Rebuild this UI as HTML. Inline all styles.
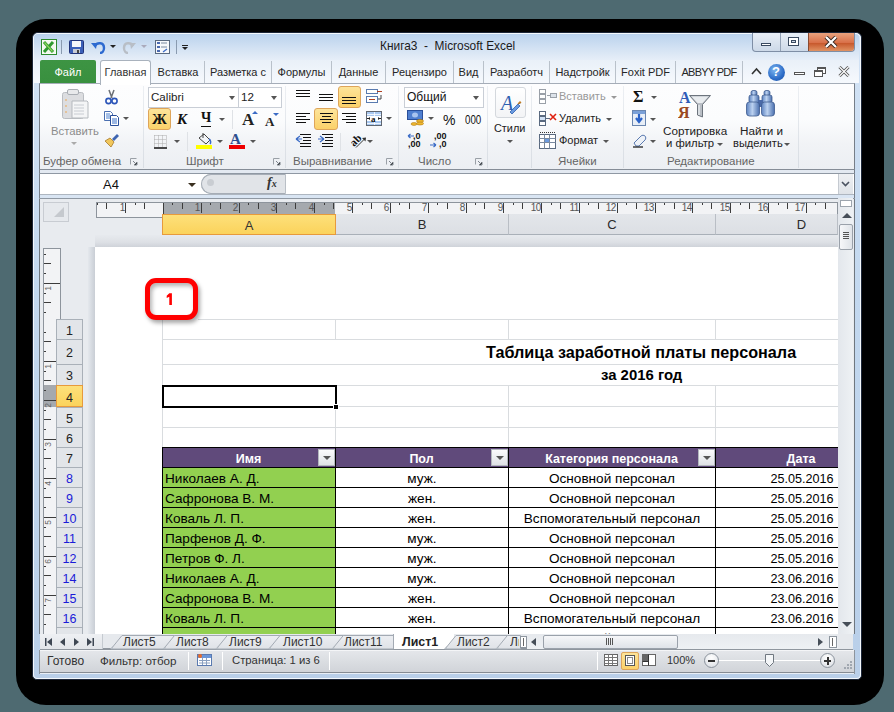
<!DOCTYPE html>
<html><head><meta charset="utf-8">
<style>
*{margin:0;padding:0;box-sizing:border-box}
html,body{width:894px;height:712px;overflow:hidden;background:#4e6a71;font-family:"Liberation Sans",sans-serif;font-size:11.5px;color:#222}
div,span{position:absolute}
.t{white-space:nowrap}
#shadow{left:16px;top:19px;width:868px;height:686px;background:#000;border-radius:30px}
#win{left:32px;top:32px;width:830px;height:648px;background:#bfd4ec;border:1px solid #1c2638;border-radius:6px 6px 5px 5px}
#winin{left:33px;top:33px;width:828px;height:646px;border:1px solid #f4f8fc;border-radius:5px 5px 4px 4px;background:linear-gradient(#d3e3f5,#c3d8ef 40%,#b9cfe9)}
#title{left:34px;top:34px;width:825px;height:26px;background:linear-gradient(#bad2ed,#d3e2f3 55%,#e6eef8);border-radius:4px 4px 0 0}
#tabs{left:34px;top:60px;width:825px;height:23px;background:linear-gradient(#e9f0f8,#f6f9fd)}
.tab{top:60px;height:23px;line-height:24px;text-align:center;color:#262626;font-size:11px;white-space:nowrap;overflow:hidden}
.tsep{top:61px;width:1px;height:22px;background:#b9c1ca}
#ribbon{left:39px;top:83px;width:816px;height:87px;background:linear-gradient(#fdfdfe,#fbfcfd 42%,#f1f3f6 70%,#eceff3);border-top:1px solid #a5adb8;border-bottom:1px solid #858d97;border-left:1px solid #767e88;border-right:1px solid #767e88}
.glabel{top:154px;height:14px;line-height:14px;text-align:center;color:#656565;font-size:11.5px;white-space:nowrap}
.gsep{top:86px;width:1px;height:82px;background:linear-gradient(#eceff3,#d8dde3)}
.rt{color:#333;font-size:11.5px;white-space:nowrap}
.dd{width:0;height:0;border-left:3px solid transparent;border-right:3px solid transparent;border-top:3px solid #555}
#fbar{left:39px;top:173px;width:816px;height:26px;background:#fff;border-top:1px solid #8f98a3;border-bottom:1px solid #8f98a3;border-left:1px solid #767e88;border-right:1px solid #767e88}
#work{left:39px;top:198px;width:816px;height:436px;background:#e8ebef;border-left:1px solid #6f777f;border-right:1px solid #6f777f}
.rul{background:#fff;border:1px solid #8d949c}
.tk{width:1px;background:#555}
.ch{top:214px;height:21px;background:linear-gradient(#e3e6ea,#dcdfe4);border-right:1px solid #b9bec5;border-bottom:1px solid #a9b0b8;text-align:center;line-height:22px;color:#2a2a2a;font-size:13px}
.rh{left:56px;width:27px;background:#e2e5e9;border-top:1px solid #a9b0b8;border-right:1px solid #a9b0b8;border-left:1px solid #a9b0b8;text-align:center;color:#222;font-size:12.5px;padding-top:2px}
.rh.b{color:#1b1bd8}
.row{left:162px;width:676px}
.c{top:0;height:100%;white-space:nowrap;overflow:hidden;font-size:13.6px;color:#000;line-height:20px}
.cell{font-size:13.6px;color:#000;line-height:18px}
.ddb{width:17px;height:17px;background:linear-gradient(#fbfbfc,#dfe2e6);border:1px solid #b3b8be}
.ddb:after{content:"";position:absolute;left:4px;top:6px;border-left:4px solid transparent;border-right:4px solid transparent;border-top:4px solid #555}
</style></head><body>
<div id="shadow"></div>
<div id="win"></div>
<div id="winin"></div>
<div id="title"></div>
<div class="t" style="left:380px;top:39px;font-size:11.9px;color:#1a1a1a">Книга3&nbsp; -&nbsp; Microsoft Excel</div>
<div id="tabs"></div>
<!-- QAT -->
<svg style="position:absolute;left:41px;top:39px" width="16" height="16" viewBox="0 0 16 16">
 <rect x="0.5" y="0.5" width="15" height="15" fill="#fff" stroke="#2e8b2e"/>
 <rect x="1.5" y="1.5" width="13" height="13" fill="#f3f8ec"/>
 <path d="M3 3l9 10M12 3L3 13" stroke="#2f9a2f" stroke-width="3"/>
 <path d="M3.5 3.5l8 9" stroke="#8fd65a" stroke-width="1.2"/>
</svg>
<div style="left:61px;top:40px;width:1px;height:14px;background:#8a9bb0"></div>
<svg style="position:absolute;left:69px;top:40px" width="15" height="14" viewBox="0 0 15 14">
 <rect x="0.5" y="0.5" width="14" height="13" rx="1" fill="#3a5fb8" stroke="#22357a"/>
 <rect x="3" y="1" width="9" height="6" fill="#f4f6fa"/>
 <rect x="4" y="9" width="7" height="4" fill="#c8ccd6"/><rect x="8" y="10" width="2" height="3" fill="#444"/>
</svg>
<svg style="position:absolute;left:91px;top:40px" width="15" height="14" viewBox="0 0 15 14">
 <path d="M4 6c2-4 9-4 9 2c0 3-2 5-4 5" stroke="#2d6ad0" stroke-width="2.4" fill="none"/>
 <path d="M0 3l6 0-1 6z" fill="#2d6ad0"/>
</svg>
<div class="dd" style="left:110px;top:45px;border-left-width:3px;border-right-width:3px;border-top-width:3px;border-top-color:#222"></div>
<svg style="position:absolute;left:122px;top:40px" width="14" height="14" viewBox="0 0 14 14">
 <path d="M11 6c-2-4-9-4-9 2c0 3 2 5 4 5" stroke="#b8bec6" stroke-width="2.4" fill="none"/>
 <path d="M14 3l-6 0 1 6z" fill="#b8bec6"/>
</svg>
<div class="dd" style="left:141px;top:45px;border-top-color:#aab"></div>
<svg style="position:absolute;left:155px;top:40px" width="15" height="14" viewBox="0 0 15 14">
 <rect x="0.5" y="0.5" width="14" height="13" fill="#f6f8fb" stroke="#5a6a80"/>
 <rect x="2" y="2" width="3" height="2" fill="#4a6ab0"/><rect x="2" y="6" width="3" height="2" fill="#4a6ab0"/><rect x="2" y="10" width="3" height="2" fill="#4a6ab0"/>
 <path d="M6 3h6M6 7h6" stroke="#7a8aa0"/><path d="M8 12l4-3" stroke="#3a6bc6" stroke-width="1.3"/>
</svg>
<div style="left:176px;top:40px;width:1px;height:14px;background:#8a9bb0"></div>
<div style="left:182px;top:45px;width:6px;height:1px;background:#222"></div>
<div class="dd" style="left:182px;top:47px;border-top-color:#222"></div>

<!-- title buttons -->
<div style="left:752px;top:33px;width:103px;height:19px;border:1px solid #7e8ea5;border-top:none;border-radius:0 0 4px 4px;background:linear-gradient(#e8eef6,#cdd9e8);overflow:hidden">
 <div style="left:27px;top:0;width:1px;height:19px;background:#93a2b6"></div>
 <div style="left:55px;top:0;width:47px;height:19px;background:linear-gradient(#e8a27e,#d9714a 50%,#c85a2e 55%,#e39a6a);border-left:1px solid #8a4a30"></div>
</div>
<div style="left:761px;top:43px;width:10px;height:3px;background:#fff;border:1px solid #3a4a60"></div>
<div style="left:788px;top:37px;width:11px;height:9px;background:#fff;border:1px solid #3a4a60"></div>
<div style="left:791px;top:40px;width:5px;height:3px;background:#cfd9e6;border:1px solid #3a4a60"></div>
<svg style="position:absolute;left:824px;top:36px" width="14" height="12" viewBox="0 0 14 12"><path d="M2 1l10 10M12 1L2 11" stroke="#3a2a22" stroke-width="4"/><path d="M2 1l10 10M12 1L2 11" stroke="#fff" stroke-width="2.2"/></svg>

<!-- tab row right icons -->
<svg style="position:absolute;left:751px;top:67px" width="11" height="9" viewBox="0 0 11 9"><path d="M1 7l4.5-5 4.5 5" stroke="#333" stroke-width="1.6" fill="none"/></svg>
<div style="left:768px;top:64px;width:17px;height:17px;border-radius:50%;background:radial-gradient(circle at 40% 35%,#7db6f0,#2d6dc8 60%,#1c4f9e);"></div>
<div class="t" style="left:772px;top:64px;font-size:13px;font-weight:bold;color:#fff">?</div>
<div style="left:794px;top:72px;width:11px;height:3px;border:1px solid #555;background:#fff"></div>
<div style="left:817px;top:67px;width:9px;height:7px;border:1px solid #555;border-top-width:2px;background:#fff"></div>
<div style="left:814px;top:70px;width:9px;height:7px;border:1px solid #555;border-top-width:2px;background:#fff"></div>
<svg style="position:absolute;left:838px;top:66px" width="12" height="11" viewBox="0 0 12 11"><path d="M1.5 1l9 9M10.5 1l-9 9" stroke="#555" stroke-width="3"/><path d="M1.5 1l9 9M10.5 1l-9 9" stroke="#fff" stroke-width="1.2"/></svg>

<!-- file tab -->
<div style="left:40px;top:60px;width:56px;height:23px;background:linear-gradient(#3d9443,#39903f);border-radius:2px 2px 0 0"></div>
<div class="tab" style="left:40px;width:56px;color:#fff">Файл</div>
<div class="tab" style="left:100px;width:50px">Главная</div>
<div class="tab" style="left:152px;width:52px">Вставка</div><div class="tsep" style="left:204px"></div>
<div class="tab" style="left:205px;width:66px">Разметка с</div><div class="tsep" style="left:271px"></div>
<div class="tab" style="left:272px;width:59px">Формулы</div><div class="tsep" style="left:331px"></div>
<div class="tab" style="left:332px;width:53px">Данные</div><div class="tsep" style="left:385px"></div>
<div class="tab" style="left:386px;width:67px">Рецензиро</div><div class="tsep" style="left:453px"></div>
<div class="tab" style="left:454px;width:29px">Вид</div><div class="tsep" style="left:483px"></div>
<div class="tab" style="left:484px;width:65px">Разработч</div><div class="tsep" style="left:549px"></div>
<div class="tab" style="left:550px;width:65px">Надстройк</div><div class="tsep" style="left:615px"></div>
<div class="tab" style="left:616px;width:59px">Foxit PDF</div><div class="tsep" style="left:675px"></div>
<div class="tab" style="left:676px;width:66px;letter-spacing:-0.7px">ABBYY PDF</div><div class="tsep" style="left:742px"></div>

<!-- ribbon -->
<div id="ribbon"></div>
<div style="left:100px;top:60px;width:51px;height:25px;background:#fff;border:1px solid #a9b2bd;border-bottom:none;border-radius:3px 3px 0 0"></div>
<div class="tab" style="left:100px;width:51px;color:#333">Главная</div>
<div class="gsep" style="left:143px"></div>
<div class="gsep" style="left:285px"></div>
<div class="gsep" style="left:398px"></div>
<div class="gsep" style="left:487px"></div>
<div class="gsep" style="left:531px"></div>
<div class="gsep" style="left:623px"></div>
<div class="gsep" style="left:798px"></div>
<div class="glabel" style="left:43px">Буфер обмена</div>
<div class="glabel" style="left:186px">Шрифт</div>
<div class="glabel" style="left:293px">Выравнивание</div>
<div class="glabel" style="left:418px">Число</div>
<div class="glabel" style="left:558px">Ячейки</div>
<div class="glabel" style="left:667px">Редактирование</div>

<!-- RIBBON -->
<!-- clipboard -->
<svg style="position:absolute;left:60px;top:88px" width="30" height="32" viewBox="0 0 30 32">
 <rect x="2.5" y="4.5" width="21" height="26" rx="2" fill="#dcdde0" stroke="#b9bcc1"/>
 <rect x="7.5" y="1.5" width="11" height="5" rx="1.5" fill="#e8e9eb" stroke="#a9adb3"/>
 <path d="M12 13h15l1 1v16H12z" fill="#f4f5f6" stroke="#b5b9be"/>
 <path d="M14 17h10M14 20h10M14 23h10M14 26h10" stroke="#c8ccd2"/>
 <circle cx="6" cy="12" r="0.8" fill="#f0a040"/><circle cx="6" cy="18" r="0.8" fill="#f0a040"/><circle cx="6" cy="24" r="0.8" fill="#f0a040"/>
</svg>
<div class="t" style="left:51px;top:125px;font-size:11.3px;color:#8c8c8c">Вставить</div>
<div class="dd" style="left:71px;top:142px;border-top-color:#aaa"></div>
<svg style="position:absolute;left:105px;top:89px" width="13" height="16" viewBox="0 0 13 16">
 <path d="M4 1l3 8M9 1L6 9" stroke="#6b6f75" stroke-width="1.5"/>
 <circle cx="3.5" cy="12" r="2.6" fill="none" stroke="#2c55b8" stroke-width="1.6"/>
 <circle cx="9.5" cy="12" r="2.6" fill="none" stroke="#2c55b8" stroke-width="1.6"/>
</svg>
<svg style="position:absolute;left:103px;top:111px" width="17" height="15" viewBox="0 0 17 15">
 <path d="M1.5 0.5h6l2 2v7h-8z" fill="#fff" stroke="#4a6fb0"/>
 <path d="M3 3h4M3 5h4M3 7h4" stroke="#4a80d0"/>
 <path d="M7.5 4.5h6l2 2v8h-8z" fill="#fff" stroke="#2a4f9a"/>
 <path d="M9 8h5M9 10h5M9 12h5" stroke="#3a70c8"/>
</svg>
<div class="dd" style="left:123px;top:117px"></div>
<svg style="position:absolute;left:103px;top:133px" width="17" height="15" viewBox="0 0 17 15">
 <path d="M9 6l5-5 2 2-5 5z" fill="#3d64b0"/>
 <path d="M2 8l5-3 4 4-3 5z" fill="#f1c75c" stroke="#a77a2a" stroke-width="0.8"/>
</svg>
<svg style="position:absolute;left:130px;top:158px" width="8" height="8" viewBox="0 0 8 8"><path d="M0.5 0.5h6M0.5 0.5v6" stroke="#9aa0a7"/><path d="M3 3l4 4M7 4v3H4" stroke="#7d848c"/></svg>

<!-- font -->
<div style="left:148px;top:87px;width:91px;height:21px;background:#fff;border:1px solid #c9ced6"></div>
<div style="left:238px;top:87px;width:44px;height:21px;background:#fff;border:1px solid #c9ced6"></div>
<div class="t" style="left:151px;top:90px;font-size:11.6px;color:#222">Calibri</div>
<div class="dd" style="left:229px;top:96px;border-left-width:3.5px;border-right-width:3.5px;border-top-width:4px"></div>
<div class="t" style="left:241px;top:90px;font-size:11.6px;color:#222">12</div>
<div class="dd" style="left:271px;top:96px;border-left-width:3.5px;border-right-width:3.5px;border-top-width:4px"></div>
<div style="left:148px;top:108px;width:23px;height:22px;background:linear-gradient(#fde49a,#fbd16a);border:1px solid #dea55a;border-radius:3px"></div>
<div class="t" style="left:152px;top:111px;font-family:'Liberation Serif';font-weight:bold;font-size:15px;color:#111">Ж</div>
<div class="t" style="left:177px;top:111px;font-family:'Liberation Serif';font-weight:bold;font-style:italic;font-size:15px;color:#111">К</div>
<div class="t" style="left:201px;top:110px;font-family:'Liberation Serif';font-weight:bold;font-size:14px;color:#111">Ч</div>
<div style="left:201px;top:126px;width:10px;height:1px;background:#111"></div>
<div class="dd" style="left:219px;top:118px"></div>
<div style="left:232px;top:110px;width:1px;height:19px;background:#dfe2e6"></div>
<div class="t" style="left:242px;top:110px;font-family:'Liberation Serif';font-weight:bold;font-size:17px;color:#222">A</div>
<div style="left:252px;top:111px;width:0;height:0;border-left:3px solid transparent;border-right:3px solid transparent;border-bottom:3px solid #3a6bc6"></div>
<div class="t" style="left:265px;top:114px;font-family:'Liberation Serif';font-weight:bold;font-size:13px;color:#222">A</div>
<div style="left:273px;top:113px;width:0;height:0;border-left:3px solid transparent;border-right:3px solid transparent;border-top:3px solid #3a6bc6"></div>
<svg style="position:absolute;left:154px;top:135px" width="14" height="14" viewBox="0 0 14 14">
 <path d="M0.5 0.5h12M0.5 4.5h12M0.5 8.5h12M0.5 0.5v12M4.5 0.5v12M8.5 0.5v12M12.5 0.5v12" stroke="#aaa" stroke-dasharray="1 1"/>
 <path d="M0 13h13" stroke="#111" stroke-width="1.5"/>
</svg>
<div class="dd" style="left:174px;top:140px"></div>
<div style="left:187px;top:132px;width:1px;height:19px;background:#dfe2e6"></div>
<svg style="position:absolute;left:196px;top:132px" width="17" height="17" viewBox="0 0 17 17">
 <path d="M3 6l5-4 6 6-4 4z" fill="#f3f5f8" stroke="#444" stroke-width="1"/>
 <path d="M7 1v5" stroke="#444"/>
 <path d="M13 7c2 1 2 4 1 5" stroke="#3a6bc6" stroke-width="1.5" fill="none"/>
 <rect x="0" y="13" width="16" height="4" fill="#ffff00"/>
</svg>
<div class="dd" style="left:217px;top:140px"></div>
<div class="t" style="left:230px;top:131px;font-family:'Liberation Serif';font-weight:bold;font-size:15px;color:#2d4f8e">A</div>
<div style="left:229px;top:145px;width:16px;height:4px;background:#ee0000"></div>
<div class="dd" style="left:250px;top:140px"></div>
<svg style="position:absolute;left:273px;top:158px" width="8" height="8" viewBox="0 0 8 8"><path d="M0.5 0.5h6M0.5 0.5v6" stroke="#9aa0a7"/><path d="M3 3l4 4M7 4v3H4" stroke="#7d848c"/></svg>

<!-- alignment -->
<div style="left:338px;top:86px;width:23px;height:22px;background:linear-gradient(#fde49a,#fbd16a);border:1px solid #dea55a;border-radius:3px"></div>
<div style="left:314px;top:108px;width:24px;height:22px;background:linear-gradient(#fde49a,#fbd16a);border:1px solid #dea55a;border-radius:3px"></div>
<svg style="position:absolute;left:0;top:0" width="894" height="180" viewBox="0 0 894 180">
 <g stroke="#111" stroke-width="1">
  <path d="M296 90.5h14M296 93.5h14M296 96.5h14"/>
  <path d="M319 94.5h14M319 97.5h14M319 100.5h14"/>
  <path d="M342 97.5h14M342 100.5h14M342 103.5h14"/>
  <path d="M296 113.5h14M296 116.5h10M296 119.5h14M296 122.5h10"/>
  <path d="M320 113.5h13M322 116.5h9M320 119.5h13M322 122.5h9"/>
  <path d="M342 113.5h14M346 116.5h10M342 119.5h14M346 122.5h10"/>
  <path d="M300 134.5h11M303 137.5h8M303 140.5h8M300 143.5h11M300 146.5h11"/>
  <path d="M322 134.5h11M325 137.5h8M325 140.5h8M322 143.5h11M322 146.5h11"/>
 </g>
 <path d="M296 139l4-3M296 139l4 3M296 139h6" stroke="#3a6bc6" stroke-width="1.2" fill="none"/>
 <path d="M324 139l-4-3M324 139l-4 3M324 139h-6" stroke="#3a6bc6" stroke-width="1.2" fill="none"/>
 <path d="M340.5 133v18" stroke="#dfe2e6"/>
 <rect x="366.5" y="89.5" width="11" height="4" fill="#fff" stroke="#5a7bb0"/>
 <path d="M377 91.5h5" stroke="#b04020"/>
 <rect x="366.5" y="96.5" width="11" height="6" fill="#fff" stroke="#5a7bb0"/>
 <path d="M369 99.5h6" stroke="#b04020"/>
 <path d="M381 95v4h-3" stroke="#444" fill="none"/>
 <rect x="366.5" y="111.5" width="15" height="14" fill="#fff" stroke="#5f6670"/>
 <rect x="367" y="112" width="14" height="4" fill="#a9c8f0"/><rect x="367" y="121" width="14" height="4" fill="#a9c8f0"/>
 <path d="M367 114.5h14M367 123.5h14M374.5 112v4M374.5 121v4" stroke="#fff" stroke-width="0.8"/>
 <path d="M367 118.5h3M378 118.5h3" stroke="#222"/>
 <path d="M368 118.5l2-1.5v3z M380 118.5l-2-1.5v3z" fill="#222"/>
 <text x="371" y="121.5" font-family="Liberation Serif" font-weight="bold" font-size="9" fill="#111">a</text>
 <text x="0" y="0" transform="translate(354 147) rotate(-45)" font-family="Liberation Serif" font-weight="bold" font-size="11" fill="#111">ab</text>
 <path d="M356 147.5l9-9" stroke="#333" stroke-width="1"/>
 <path d="M366 137.5l-4 0.5 3.5 3.5z" fill="#333"/>
</svg>
<div class="dd" style="left:386px;top:117px"></div>
<div class="dd" style="left:367px;top:140px"></div>
<svg style="position:absolute;left:386px;top:158px" width="8" height="8" viewBox="0 0 8 8"><path d="M0.5 0.5h6M0.5 0.5v6" stroke="#9aa0a7"/><path d="M3 3l4 4M7 4v3H4" stroke="#7d848c"/></svg>

<!-- number -->
<div style="left:404px;top:87px;width:80px;height:21px;background:#fff;border:1px solid #c9ced6"></div>
<div class="t" style="left:407px;top:90px;font-size:12px;color:#111">Общий</div>
<div class="dd" style="left:473px;top:96px;border-left-width:3.5px;border-right-width:3.5px;border-top-width:4px"></div>
<svg style="position:absolute;left:407px;top:110px" width="18" height="17" viewBox="0 0 18 17">
 <rect x="0.5" y="0.5" width="15" height="9" fill="#4f7fd0" stroke="#2a4f9a"/>
 <ellipse cx="8" cy="5" rx="3" ry="2.5" fill="#a9c4ef"/>
 <ellipse cx="13" cy="11" rx="3.5" ry="1.5" fill="#f0b830" stroke="#b07a10" stroke-width="0.6"/>
 <ellipse cx="13" cy="13.5" rx="3.5" ry="1.5" fill="#f0b830" stroke="#b07a10" stroke-width="0.6"/>
 <ellipse cx="7" cy="14" rx="3" ry="1.4" fill="#f0b830" stroke="#b07a10" stroke-width="0.6"/>
</svg>
<div class="dd" style="left:428px;top:117px"></div>
<div class="t" style="left:443px;top:112px;font-size:14px;color:#111">%</div>
<div class="t" style="left:465px;top:112px;font-size:13px;color:#111;transform:scaleX(0.75);transform-origin:left">000</div>
<div class="t" style="left:413px;top:132px;font-size:9px;font-weight:bold;color:#111;line-height:8px">,0<br><span style="position:static;margin-left:-5px">,00</span></div>
<div class="t" style="left:434px;top:132px;font-size:9px;font-weight:bold;color:#111;line-height:8px">,00<br><span style="position:static;margin-left:5px">,0</span></div>
<svg style="position:absolute;left:407px;top:133px" width="40" height="16" viewBox="0 0 40 16">
 <path d="M1 3h6M1 3l2.5-2M1 3l2.5 2" stroke="#3a6bc6" stroke-width="1.2" fill="none"/>
 <path d="M23 12h6M29 12l-2.5-2M29 12l-2.5 2" stroke="#3a6bc6" stroke-width="1.2" fill="none"/>
</svg>
<svg style="position:absolute;left:475px;top:158px" width="8" height="8" viewBox="0 0 8 8"><path d="M0.5 0.5h6M0.5 0.5v6" stroke="#9aa0a7"/><path d="M3 3l4 4M7 4v3H4" stroke="#7d848c"/></svg>

<!-- styles -->
<div style="left:495px;top:87px;width:31px;height:31px;background:linear-gradient(#fff,#f3f4f6);border:1px solid #d4d8dd;border-radius:3px"></div>
<div class="t" style="left:501px;top:92px;font-family:'Liberation Serif';font-style:italic;font-size:20px;color:#2d5fb0">A</div>
<svg style="position:absolute;left:508px;top:100px" width="14" height="14" viewBox="0 0 14 14"><path d="M2 12l8-8 2 2-8 8z" fill="#6b9be0" stroke="#2d5fb0" stroke-width="0.8"/><path d="M10 4l2-2 1 1" stroke="#c07a20" stroke-width="1.3"/></svg>
<div class="t" style="left:494px;top:122px;font-size:10.9px;color:#222">Стили</div>
<div class="dd" style="left:507px;top:140px"></div>

<!-- cells -->
<svg style="position:absolute;left:539px;top:89px" width="18" height="16" viewBox="0 0 18 16">
 <rect x="0.5" y="0.5" width="6" height="4" fill="#fff" stroke="#9aa0a8"/><rect x="0.5" y="5.5" width="6" height="4" fill="#fff" stroke="#9aa0a8"/><rect x="0.5" y="10.5" width="6" height="4" fill="#fff" stroke="#9aa0a8"/>
 <rect x="11.5" y="4.5" width="6" height="4" fill="#dde3ea" stroke="#9aa0a8"/><path d="M8 6.5h3" stroke="#9aa0a8"/>
</svg>
<div class="t" style="left:559px;top:90px;font-size:11px;color:#999">Вставить</div>
<div class="dd" style="left:611px;top:96px;border-top-color:#999"></div>
<svg style="position:absolute;left:539px;top:111px" width="18" height="15" viewBox="0 0 18 15">
 <rect x="0.5" y="0.5" width="6" height="4" fill="#fff" stroke="#5a6a80"/><rect x="0.5" y="5.5" width="6" height="4" fill="#cfe0f5" stroke="#5a6a80"/><rect x="0.5" y="10.5" width="6" height="4" fill="#fff" stroke="#5a6a80"/>
 <path d="M7 7.5h4" stroke="#5a6a80"/><path d="M11 3l6 6M17 3l-6 6" stroke="#e02010" stroke-width="1.6"/>
</svg>
<div class="t" style="left:559px;top:112px;font-size:11px;color:#222">Удалить</div>
<div class="dd" style="left:606px;top:118px"></div>
<svg style="position:absolute;left:539px;top:132px" width="18" height="17" viewBox="0 0 18 17">
 <rect x="0.5" y="2.5" width="16" height="14" fill="#fff" stroke="#5a6a80"/>
 <path d="M0.5 6.5h16M0.5 10.5h16M5.5 2.5v14M10.5 2.5v14" stroke="#7a8aa0"/>
 <rect x="6" y="7" width="4" height="3" fill="#6b9be0"/>
 <path d="M1 0.5h15" stroke="#333" stroke-dasharray="1 1"/>
</svg>
<div class="t" style="left:559px;top:134px;font-size:11px;color:#222">Формат</div>
<div class="dd" style="left:603px;top:140px"></div>

<!-- editing -->
<div class="t" style="left:633px;top:88px;font-family:'Liberation Serif';font-weight:bold;font-size:16px;color:#111">Σ</div>
<div class="dd" style="left:651px;top:96px"></div>
<svg style="position:absolute;left:632px;top:110px" width="15" height="17" viewBox="0 0 15 17">
 <rect x="0.5" y="0.5" width="13" height="15" fill="#e8eef7" stroke="#6a86b0"/>
 <rect x="1" y="1" width="12" height="3" fill="#7aa0d8"/>
 <path d="M7 4v7M4 8l3 4 3-4" stroke="#2a62c8" stroke-width="2.2" fill="none"/>
</svg>
<div class="dd" style="left:650px;top:118px"></div>
<svg style="position:absolute;left:632px;top:134px" width="16" height="14" viewBox="0 0 16 14">
 <path d="M2 9l7-7c1-1 3-1 4 0s1 3 0 4l-6 6H4z" fill="#eef2f8" stroke="#5a7ab0"/>
 <path d="M1 13h10" stroke="#111" stroke-width="1.2"/>
</svg>
<div class="dd" style="left:650px;top:140px"></div>
<svg style="position:absolute;left:678px;top:88px" width="34" height="32" viewBox="0 0 34 32">
 <text x="1" y="15" font-family="Liberation Serif" font-weight="bold" font-size="16" fill="#2f5cb8">A</text>
 <text x="0" y="30" font-family="Liberation Serif" font-weight="bold" font-size="16" fill="#9a4a22">Я</text>
 <path d="M11.5 7.5h21l-8 9v12.5l-5-2v-10.5z" fill="#b9bec5" stroke="#6d747d"/>
 <path d="M13.5 8.5h17l-6 6.5h-5z" fill="#e9ecef"/>
 <path d="M21 17v10" stroke="#e5e8eb" stroke-width="1.5"/>
</svg>
<div class="t" style="left:663px;top:124px;font-size:11.7px;color:#222">Сортировка</div>
<div class="t" style="left:666px;top:137px;font-size:11.3px;color:#222">и фильтр</div>
<div class="dd" style="left:717px;top:143px"></div>
<svg style="position:absolute;left:745px;top:89px" width="32" height="30" viewBox="0 0 32 30">
 <defs><linearGradient id="bn" x1="0" x2="1"><stop offset="0" stop-color="#5c82c0"/><stop offset="0.45" stop-color="#bcd2f0"/><stop offset="1" stop-color="#4a6fae"/></linearGradient></defs>
 <rect x="6" y="1.5" width="6" height="5" rx="2" fill="url(#bn)" stroke="#3d5a8e" stroke-width="0.8"/>
 <rect x="19" y="1.5" width="6" height="5" rx="2" fill="url(#bn)" stroke="#3d5a8e" stroke-width="0.8"/>
 <rect x="4" y="6" width="10" height="8" rx="2" fill="url(#bn)" stroke="#3d5a8e" stroke-width="0.8"/>
 <rect x="17" y="6" width="10" height="8" rx="2" fill="url(#bn)" stroke="#3d5a8e" stroke-width="0.8"/>
 <rect x="13" y="11" width="5" height="7" fill="#4a6aa8"/>
 <rect x="1.5" y="13" width="13" height="14" rx="3" fill="url(#bn)" stroke="#3d5a8e" stroke-width="0.8"/>
 <rect x="16.5" y="13" width="13" height="14" rx="3" fill="url(#bn)" stroke="#3d5a8e" stroke-width="0.8"/>
</svg>
<div class="t" style="left:740px;top:124px;font-size:11.7px;color:#222">Найти и</div>
<div class="t" style="left:733px;top:137px;font-size:11.1px;color:#222">выделить</div>
<div class="dd" style="left:784px;top:143px"></div>

<!-- /RIBBON -->
<!-- formula bar -->
<div style="left:39px;top:170px;width:816px;height:3px;background:#e3e9f1;border-left:1px solid #767e88;border-right:1px solid #767e88"></div>
<div id="fbar"></div>
<div style="left:40px;top:194px;width:814px;height:4px;background:#d9e5f3;border-top:1px solid #aeb6c0"></div>
<div class="t" style="left:103px;top:177px;font-size:13px;color:#111">A4</div>
<div class="dd" style="left:188px;top:183px;border-left-width:4px;border-right-width:4px;border-top-width:4px;border-top-color:#3a3020"></div>
<div style="left:201px;top:174px;width:85px;height:20px;background:#e1e4e8;border:1px solid #a6adb6;border-left:none;border-right:1px solid #b9bfc6;border-radius:10px 0 0 10px"></div>
<div style="left:201px;top:174px;width:20px;height:20px;border:1px solid #a6adb6;border-right:none;border-radius:10px 0 0 10px;background:#e1e4e8"></div>
<div style="left:207px;top:179px;width:7px;height:7px;border-radius:50%;background:#c9cdd2"></div>
<div class="t" style="left:267px;top:175px;font-family:'Liberation Serif';font-style:italic;font-weight:bold;font-size:14px;color:#333">f<span style="position:static;font-size:10px">x</span></div>

<div style="left:838px;top:174px;width:15px;height:20px;background:linear-gradient(#eef0f3,#dfe3e8);border-left:1px solid #c5cad1"></div>
<svg style="position:absolute;left:841px;top:181px" width="9" height="6" viewBox="0 0 9 6"><path d="M1 1l3.5 3.5L8 1" stroke="#4a5260" stroke-width="1.6" fill="none"/></svg>
<!-- workspace -->
<div id="work"></div>
<div style="left:39px;top:198px;width:816px;height:1px;background:#8f98a3"></div>
<!-- select-all corner -->
<div style="left:43px;top:202px;width:26px;height:20px;border:1px solid #c8ccd2;background:#e6e9ed"></div>
<div style="left:54px;top:207px;width:0;height:0;border-left:10px solid transparent;border-bottom:10px solid #c5c9ce"></div>
<!-- horiz ruler -->
<svg style="position:absolute;left:0;top:0" width="894" height="712" viewBox="0 0 894 712">
<rect x="96.5" y="202.5" width="741" height="15" fill="#f2f3f5" stroke="#8d949c"/>
<rect x="163" y="203" width="172" height="11" fill="#a5a9ae"/>
<text x="124.5" y="211" text-anchor="end" font-family="Liberation Sans" font-size="10" letter-spacing="-0.7" fill="#555">1</text>
<text x="199.5" y="211" text-anchor="end" font-family="Liberation Sans" font-size="10" letter-spacing="-0.7" fill="#555">1</text>
<text x="237.5" y="211" text-anchor="end" font-family="Liberation Sans" font-size="10" letter-spacing="-0.7" fill="#555">2</text>
<text x="275.5" y="211" text-anchor="end" font-family="Liberation Sans" font-size="10" letter-spacing="-0.7" fill="#555">3</text>
<text x="313.5" y="211" text-anchor="end" font-family="Liberation Sans" font-size="10" letter-spacing="-0.7" fill="#555">4</text>
<text x="351.5" y="211" text-anchor="end" font-family="Liberation Sans" font-size="10" letter-spacing="-0.7" fill="#555">5</text>
<text x="388.5" y="211" text-anchor="end" font-family="Liberation Sans" font-size="10" letter-spacing="-0.7" fill="#555">6</text>
<text x="426.5" y="211" text-anchor="end" font-family="Liberation Sans" font-size="10" letter-spacing="-0.7" fill="#555">7</text>
<text x="464.5" y="211" text-anchor="end" font-family="Liberation Sans" font-size="10" letter-spacing="-0.7" fill="#555">8</text>
<text x="502.5" y="211" text-anchor="end" font-family="Liberation Sans" font-size="10" letter-spacing="-0.7" fill="#555">9</text>
<text x="540.5" y="211" text-anchor="end" font-family="Liberation Sans" font-size="10" letter-spacing="-0.7" fill="#555">10</text>
<text x="578.5" y="211" text-anchor="end" font-family="Liberation Sans" font-size="10" letter-spacing="-0.7" fill="#555">11</text>
<text x="615.5" y="211" text-anchor="end" font-family="Liberation Sans" font-size="10" letter-spacing="-0.7" fill="#555">12</text>
<text x="653.5" y="211" text-anchor="end" font-family="Liberation Sans" font-size="10" letter-spacing="-0.7" fill="#555">13</text>
<text x="691.5" y="211" text-anchor="end" font-family="Liberation Sans" font-size="10" letter-spacing="-0.7" fill="#555">14</text>
<text x="729.5" y="211" text-anchor="end" font-family="Liberation Sans" font-size="10" letter-spacing="-0.7" fill="#555">15</text>
<text x="767.5" y="211" text-anchor="end" font-family="Liberation Sans" font-size="10" letter-spacing="-0.7" fill="#555">16</text>
<text x="804.5" y="211" text-anchor="end" font-family="Liberation Sans" font-size="10" letter-spacing="-0.7" fill="#555">17</text>
<path d="M97.5 203v2 M106.5 203v6 M125.5 203v10 M135.5 203v2 M144.5 203v6 M163.5 203v15 M172.5 203v2 M182.5 203v6 M201.5 203v10 M210.5 203v2 M220.5 203v6 M239.5 203v10 M248.5 203v2 M258.5 203v6 M276.5 203v10 M286.5 203v2 M295.5 203v6 M314.5 203v10 M324.5 203v2 M333.5 203v6 M352.5 203v10 M362.5 203v2 M371.5 203v6 M390.5 203v10 M399.5 203v2 M409.5 203v6 M428.5 203v10 M437.5 203v2 M447.5 203v6 M466.5 203v10 M475.5 203v2 M484.5 203v6 M503.5 203v10 M513.5 203v2 M522.5 203v6 M541.5 203v10 M551.5 203v2 M560.5 203v6 M579.5 203v10 M588.5 203v2 M598.5 203v6 M617.5 203v10 M626.5 203v2 M636.5 203v6 M655.5 203v10 M664.5 203v2 M674.5 203v6 M692.5 203v10 M702.5 203v2 M711.5 203v6 M730.5 203v10 M740.5 203v2 M749.5 203v6 M768.5 203v10 M778.5 203v2 M787.5 203v6 M806.5 203v10 M815.5 203v2 M825.5 203v6" stroke="#3c3c3c"/>
<rect x="43.5" y="248.5" width="17" height="390" fill="#f2f3f5" stroke="#8d949c"/>
<rect x="44" y="385" width="12" height="22" fill="#a5a9ae"/>
<text x="0" y="0" transform="translate(51 286) rotate(-90)" text-anchor="end" font-family="Liberation Sans" font-size="8.5" fill="#666">1</text>
<text x="0" y="0" transform="translate(51 364) rotate(-90)" text-anchor="end" font-family="Liberation Sans" font-size="8.5" fill="#666">1</text>
<text x="0" y="0" transform="translate(51 403) rotate(-90)" text-anchor="end" font-family="Liberation Sans" font-size="8.5" fill="#666">2</text>
<text x="0" y="0" transform="translate(51 442) rotate(-90)" text-anchor="end" font-family="Liberation Sans" font-size="8.5" fill="#666">3</text>
<text x="0" y="0" transform="translate(51 481) rotate(-90)" text-anchor="end" font-family="Liberation Sans" font-size="8.5" fill="#666">4</text>
<text x="0" y="0" transform="translate(51 520) rotate(-90)" text-anchor="end" font-family="Liberation Sans" font-size="8.5" fill="#666">5</text>
<text x="0" y="0" transform="translate(51 559) rotate(-90)" text-anchor="end" font-family="Liberation Sans" font-size="8.5" fill="#666">6</text>
<text x="0" y="0" transform="translate(51 598) rotate(-90)" text-anchor="end" font-family="Liberation Sans" font-size="8.5" fill="#666">7</text>
<path d="M44 254.5h2 M44 263.5h7 M44 273.5h2 M44 283.5h16 M44 293.5h2 M44 302.5h7 M44 312.5h2 M44 332.5h2 M44 341.5h7 M44 351.5h2 M44 361.5h12 M44 371.5h2 M44 380.5h7 M44 390.5h2 M44 400.5h12 M44 410.5h2 M44 419.5h7 M44 429.5h2 M44 439.5h12 M44 449.5h2 M44 458.5h7 M44 468.5h2 M44 478.5h12 M44 488.5h2 M44 497.5h7 M44 507.5h2 M44 517.5h12 M44 527.5h2 M44 536.5h7 M44 546.5h2 M44 556.5h12 M44 566.5h2 M44 575.5h7 M44 585.5h2 M44 595.5h12 M44 605.5h2 M44 614.5h7 M44 624.5h2" stroke="#3c3c3c"/>
</svg>
<!-- column headers -->
<div class="ch" style="left:162px;width:174px;background:linear-gradient(#fde07a,#fbd35c);border:1px solid #e79a3c;color:#333">A</div>
<div class="ch" style="left:336px;width:173px">B</div>
<div class="ch" style="left:509px;width:207px">C</div>
<div class="ch" style="left:716px;width:122px;text-indent:50px">D</div>
<div style="left:95px;top:235px;width:743px;height:12px;background:linear-gradient(#e7eaee,#dde0e5 60%,#cfd3d9)"></div>
<!-- vertical ruler -->

<!-- page -->
<div style="left:88px;top:247px;width:7px;height:387px;background:linear-gradient(90deg,#e4e8ed,#c9ced5)"></div>
<div style="left:95px;top:247px;width:743px;height:387px;background:#fff"></div>

<!-- GRID -->
<div class="rh" style="top:319px;height:20px;line-height:18px;">1</div>
<div class="rh" style="top:339px;height:25px;line-height:23px;">2</div>
<div class="rh" style="top:364px;height:21px;line-height:19px;">3</div>
<div class="rh" style="top:385px;height:22px;line-height:20px;background:linear-gradient(#fde07a,#fbd35c);border:1px solid #e79a3c;">4</div>
<div class="rh" style="top:407px;height:20px;line-height:18px;">5</div>
<div class="rh" style="top:427px;height:20px;line-height:18px;">6</div>
<div class="rh" style="top:447px;height:20px;line-height:18px;">7</div>
<div class="rh b" style="top:467px;height:20px;line-height:18px;">8</div>
<div class="rh b" style="top:487px;height:20px;line-height:18px;">9</div>
<div class="rh b" style="top:507px;height:20px;line-height:18px;">10</div>
<div class="rh b" style="top:527px;height:20px;line-height:18px;">11</div>
<div class="rh b" style="top:547px;height:20px;line-height:18px;">12</div>
<div class="rh b" style="top:567px;height:20px;line-height:18px;">14</div>
<div class="rh b" style="top:587px;height:20px;line-height:18px;">15</div>
<div class="rh b" style="top:607px;height:20px;line-height:18px;">16</div>
<div class="rh b" style="top:627px;height:7px;line-height:5px;"></div>
<div style="left:198px;top:319px;width:640px;height:1px;background:#d9dcdf"></div>
<div style="left:162px;top:339px;width:676px;height:1px;background:#d9dcdf"></div>
<div style="left:162px;top:364px;width:676px;height:1px;background:#d9dcdf"></div>
<div style="left:162px;top:385px;width:676px;height:1px;background:#d9dcdf"></div>
<div style="left:162px;top:406px;width:676px;height:1px;background:#d9dcdf"></div>
<div style="left:162px;top:427px;width:676px;height:1px;background:#d9dcdf"></div>
<div style="left:162px;top:319px;width:1px;height:128px;background:#d9dcdf"></div>
<div style="left:335px;top:319px;width:1px;height:20px;background:#d9dcdf"></div>
<div style="left:335px;top:385px;width:1px;height:62px;background:#d9dcdf"></div>
<div style="left:508px;top:319px;width:1px;height:20px;background:#d9dcdf"></div>
<div style="left:508px;top:385px;width:1px;height:62px;background:#d9dcdf"></div>
<div style="left:715px;top:319px;width:1px;height:20px;background:#d9dcdf"></div>
<div style="left:715px;top:385px;width:1px;height:62px;background:#d9dcdf"></div>
<div class="t" style="left:486px;top:343px;font-size:16.2px;font-weight:bold;color:#000">Таблица заработной платы персонала</div>
<div class="t" style="left:601px;top:367px;font-size:14.9px;font-weight:bold;color:#000">за 2016 год</div>
<div style="left:162px;top:385px;width:175px;height:23px;border:2px solid #000"></div>
<div style="left:333px;top:404px;width:6px;height:6px;background:#000;border:1px solid #fff"></div>
<div style="left:162px;top:447px;width:676px;height:21px;background:#604a7b;border-top:1px solid #000;border-bottom:1px solid #000"></div>
<div style="left:162px;top:447px;width:1px;height:187px;background:#000"></div>
<div class="t" style="left:162px;top:452px;width:173px;text-align:center;font-size:12.5px;font-weight:bold;color:#fff">Имя</div>
<div class="ddb" style="left:318px;top:449px"></div>
<div style="left:335px;top:447px;width:1px;height:187px;background:#000"></div>
<div class="t" style="left:335px;top:452px;width:173px;text-align:center;font-size:12.5px;font-weight:bold;color:#fff">Пол</div>
<div class="ddb" style="left:491px;top:449px"></div>
<div style="left:508px;top:447px;width:1px;height:187px;background:#000"></div>
<div class="t" style="left:508px;top:452px;width:207px;text-align:center;font-size:12.5px;font-weight:bold;color:#fff">Категория персонала</div>
<div class="ddb" style="left:698px;top:449px"></div>
<div style="left:715px;top:447px;width:1px;height:187px;background:#000"></div>
<div class="t" style="left:715px;top:452px;width:172px;text-align:center;font-size:12.5px;font-weight:bold;color:#fff">Дата</div>
<div style="left:163px;top:468px;width:172px;height:19px;background:#92d050"></div>
<div style="left:162px;top:487px;width:676px;height:1px;background:#000"></div>
<div class="t cell" style="left:165px;top:470px">Николаев А. Д.</div>
<div class="t cell" style="left:336px;top:470px;width:172px;text-align:center">муж.</div>
<div class="t cell" style="left:509px;top:470px;width:206px;text-align:center">Основной персонал</div>
<div class="t cell" style="left:716px;top:470px;width:172px;text-align:center;font-size:12.6px">25.05.2016</div>
<div style="left:163px;top:488px;width:172px;height:19px;background:#92d050"></div>
<div style="left:162px;top:507px;width:676px;height:1px;background:#000"></div>
<div class="t cell" style="left:165px;top:490px">Сафронова В. М.</div>
<div class="t cell" style="left:336px;top:490px;width:172px;text-align:center">жен.</div>
<div class="t cell" style="left:509px;top:490px;width:206px;text-align:center">Основной персонал</div>
<div class="t cell" style="left:716px;top:490px;width:172px;text-align:center;font-size:12.6px">25.05.2016</div>
<div style="left:163px;top:508px;width:172px;height:19px;background:#92d050"></div>
<div style="left:162px;top:527px;width:676px;height:1px;background:#000"></div>
<div class="t cell" style="left:165px;top:510px">Коваль Л. П.</div>
<div class="t cell" style="left:336px;top:510px;width:172px;text-align:center">жен.</div>
<div class="t cell" style="left:509px;top:510px;width:206px;text-align:center">Вспомогательный персонал</div>
<div class="t cell" style="left:716px;top:510px;width:172px;text-align:center;font-size:12.6px">25.05.2016</div>
<div style="left:163px;top:528px;width:172px;height:19px;background:#92d050"></div>
<div style="left:162px;top:547px;width:676px;height:1px;background:#000"></div>
<div class="t cell" style="left:165px;top:530px">Парфенов Д. Ф.</div>
<div class="t cell" style="left:336px;top:530px;width:172px;text-align:center">муж.</div>
<div class="t cell" style="left:509px;top:530px;width:206px;text-align:center">Основной персонал</div>
<div class="t cell" style="left:716px;top:530px;width:172px;text-align:center;font-size:12.6px">25.05.2016</div>
<div style="left:163px;top:548px;width:172px;height:19px;background:#92d050"></div>
<div style="left:162px;top:567px;width:676px;height:1px;background:#000"></div>
<div class="t cell" style="left:165px;top:550px">Петров Ф. Л.</div>
<div class="t cell" style="left:336px;top:550px;width:172px;text-align:center">муж.</div>
<div class="t cell" style="left:509px;top:550px;width:206px;text-align:center">Основной персонал</div>
<div class="t cell" style="left:716px;top:550px;width:172px;text-align:center;font-size:12.6px">25.05.2016</div>
<div style="left:163px;top:568px;width:172px;height:19px;background:#92d050"></div>
<div style="left:162px;top:587px;width:676px;height:1px;background:#000"></div>
<div class="t cell" style="left:165px;top:570px">Николаев А. Д.</div>
<div class="t cell" style="left:336px;top:570px;width:172px;text-align:center">муж.</div>
<div class="t cell" style="left:509px;top:570px;width:206px;text-align:center">Основной персонал</div>
<div class="t cell" style="left:716px;top:570px;width:172px;text-align:center;font-size:12.6px">23.06.2016</div>
<div style="left:163px;top:588px;width:172px;height:19px;background:#92d050"></div>
<div style="left:162px;top:607px;width:676px;height:1px;background:#000"></div>
<div class="t cell" style="left:165px;top:590px">Сафронова В. М.</div>
<div class="t cell" style="left:336px;top:590px;width:172px;text-align:center">жен.</div>
<div class="t cell" style="left:509px;top:590px;width:206px;text-align:center">Основной персонал</div>
<div class="t cell" style="left:716px;top:590px;width:172px;text-align:center;font-size:12.6px">23.06.2016</div>
<div style="left:163px;top:608px;width:172px;height:19px;background:#92d050"></div>
<div style="left:162px;top:627px;width:676px;height:1px;background:#000"></div>
<div class="t cell" style="left:165px;top:610px">Коваль Л. П.</div>
<div class="t cell" style="left:336px;top:610px;width:172px;text-align:center">жен.</div>
<div class="t cell" style="left:509px;top:610px;width:206px;text-align:center">Вспомогательный персонал</div>
<div class="t cell" style="left:716px;top:610px;width:172px;text-align:center;font-size:12.6px">23.06.2016</div>
<div style="left:163px;top:628px;width:172px;height:6px;background:#92d050"></div>
<div class="t cell" style="left:165px;top:630px">Парфенов Д. Ф.</div>
<div class="t cell" style="left:336px;top:630px;width:172px;text-align:center">муж.</div>
<div class="t cell" style="left:509px;top:630px;width:206px;text-align:center">Основной персонал</div>
<div class="t cell" style="left:716px;top:630px;width:172px;text-align:center;font-size:12.6px">23.06.2016</div>

<!-- /GRID -->
<!-- scrollbar -->
<div style="left:838px;top:198px;width:15px;height:436px;background:linear-gradient(90deg,#e3e7ec,#eef1f4)"></div>
<div style="left:840px;top:200px;width:12px;height:7px;background:#fff;border:1px solid #9da5ae"></div>
<div style="left:842px;top:213px;width:0;height:0;border-left:5px solid transparent;border-right:5px solid transparent;border-bottom:5px solid #464e58"></div>
<div style="left:839px;top:224px;width:14px;height:26px;border:1px solid #9aa1aa;border-radius:2px;background:linear-gradient(90deg,#f6f7f9,#dfe3e8)"></div>
<div style="left:843px;top:232px;width:6px;height:1px;background:#555;box-shadow:0 2px 0 #555,0 4px 0 #555,0 6px 0 #555"></div>
<div style="left:842px;top:622px;width:0;height:0;border-left:5px solid transparent;border-right:5px solid transparent;border-top:5px solid #464e58"></div>

<!-- sheet tabs -->
<div style="left:40px;top:634px;width:813px;height:16px;background:#e6e9ed;border-bottom:2px solid #8f969e"></div>
<!-- status -->
<div style="left:39px;top:650px;width:816px;height:24px;background:linear-gradient(#f4f5f7 0,#f4f5f7 1px,#e4e6ea 1px,#dbdee2 45%,#d1d4d9 90%,#cdd1d6 22px,#858b93 22px,#858b93 23px,#e8eef6 23px);border-left:1px solid #8d949c;border-right:1px solid #8d949c"></div>
<div class="t" style="left:47px;top:654px;font-size:12px;color:#333">Готово</div>
<div class="t" style="left:100px;top:654px;font-size:11.6px;color:#333">Фильтр: отбор</div>
<!-- BOTTOM -->
<!-- nav buttons -->
<div style="left:40px;top:634px;width:63px;height:15px;background:linear-gradient(#eef0f3,#e2e5e9);border-right:1px solid #c5cad0"></div>
<svg style="position:absolute;left:45px;top:637px" width="55" height="10" viewBox="0 0 55 10">
 <g fill="#3e4753"><rect x="0" y="1" width="1.5" height="8"/><path d="M2 5l5-4v8z"/>
 <path d="M15 5l5-4v8z"/>
 <path d="M34 5l-5-4v8z"/>
 <path d="M47 5l-5-4v8z"/><rect x="47.5" y="1" width="1.5" height="8"/></g>
</svg>
<!-- sheet tabs -->
<svg style="position:absolute;left:0;top:634px" width="540" height="16" viewBox="0 634 540 16">
<defs><linearGradient id="tg" x1="0" y1="0" x2="0" y2="1"><stop offset="0" stop-color="#eceef2"/><stop offset="1" stop-color="#dfe2e7"/></linearGradient></defs>
<path d="M111 649L122 635.5H174.5V649z" fill="url(#tg)" stroke="#a3aab3" stroke-width="1"/><path d="M110 649l3-3v3z" fill="#b5bcc4"/>
<path d="M163.5 649L174.5 635.5H227.5V649z" fill="url(#tg)" stroke="#a3aab3" stroke-width="1"/><path d="M162.5 649l3-3v3z" fill="#b5bcc4"/>
<path d="M216.3 649L227.3 635.5H280.5V649z" fill="url(#tg)" stroke="#a3aab3" stroke-width="1"/><path d="M215.3 649l3-3v3z" fill="#b5bcc4"/>
<path d="M269 649L280 635.5H343.5V649z" fill="url(#tg)" stroke="#a3aab3" stroke-width="1"/><path d="M268 649l3-3v3z" fill="#b5bcc4"/>
<path d="M332.3 649L343.3 635.5H393.5V649z" fill="url(#tg)" stroke="#a3aab3" stroke-width="1"/><path d="M331.3 649l3-3v3z" fill="#b5bcc4"/>
<rect x="394" y="634" width="60" height="15" fill="#fff"/>
<path d="M393.5 634v15" stroke="#a3aab3"/>
<path d="M445 649L456 635.5H507.5V649z" fill="url(#tg)" stroke="#a3aab3" stroke-width="1"/><path d="M444 649l3-3v3z" fill="#b5bcc4"/>
<path d="M496.4 649L507.4 635.5H520.5V649z" fill="url(#tg)" stroke="#a3aab3" stroke-width="1"/><path d="M495.4 649l3-3v3z" fill="#b5bcc4"/>
</svg>
<div class="t" style="left:123px;top:635px;font-size:12px;color:#333">Лист5</div>
<div class="t" style="left:176px;top:635px;font-size:12px;color:#333">Лист8</div>
<div class="t" style="left:229px;top:635px;font-size:12px;color:#333">Лист9</div>
<div class="t" style="left:283px;top:635px;font-size:12px;color:#333">Лист10</div>
<div class="t" style="left:344px;top:635px;font-size:12px;color:#333">Лист11</div>
<div class="t" style="left:402px;top:635px;font-size:12.4px;font-weight:bold;color:#222">Лист1</div>
<div class="t" style="left:457px;top:635px;font-size:12px;color:#333">Лист2</div>
<div class="t" style="left:510px;top:635px;font-size:12px;color:#333;width:9px;overflow:hidden">Лист</div>
<div style="left:520px;top:636px;width:7px;height:12px;background:#fff;border:1px solid #8e969f"></div>
<div style="left:523px;top:638px;width:1px;height:8px;background:#666"></div>
<!-- h scrollbar -->
<div style="left:527px;top:634px;width:311px;height:15px;background:linear-gradient(#e6e9ed,#eef1f4)"></div>
<div style="left:531px;top:638px;width:0;height:0;border-top:4px solid transparent;border-bottom:4px solid transparent;border-right:5px solid #464e58"></div>
<div style="left:543px;top:635px;width:135px;height:14px;border:1px solid #9aa1aa;border-radius:2px;background:linear-gradient(#f6f7f9,#dfe3e8)"></div>
<div style="left:606px;top:638px;width:1px;height:7px;background:#555;box-shadow:2px 0 0 #555,4px 0 0 #555,6px 0 0 #555"></div>
<div style="left:818px;top:638px;width:0;height:0;border-top:4px solid transparent;border-bottom:4px solid transparent;border-left:5px solid #464e58"></div>
<div style="left:829px;top:636px;width:8px;height:12px;background:#fff;border:1px solid #8e969f"></div>
<div style="left:832px;top:638px;width:1px;height:8px;background:#666"></div>
<div style="left:838px;top:634px;width:15px;height:15px;background:#e6e9ed"></div>
<!-- status bar extras -->
<div style="left:188px;top:652px;width:1px;height:18px;background:#b5bcc4;border-right:1px solid #fff"></div>
<svg style="position:absolute;left:197px;top:654px" width="15" height="12" viewBox="0 0 15 12">
 <rect x="0.5" y="0.5" width="14" height="11" fill="#fff" stroke="#5a7ab0"/>
 <rect x="1" y="1" width="13" height="3" fill="#6b96d8"/>
 <path d="M2 6.5h11M2 9h11M5.5 4v7M9.5 4v7" stroke="#8aa0c0"/>
 <circle cx="3" cy="2" r="2" fill="#e86a2a"/>
</svg>
<div style="left:222px;top:652px;width:1px;height:18px;background:#b5bcc4;border-right:1px solid #fff"></div>
<div class="t" style="left:232px;top:654px;font-size:11.3px;color:#333">Страница: 1 из 6</div>
<div style="left:329px;top:652px;width:1px;height:18px;background:#b5bcc4;border-right:1px solid #fff"></div>
<div style="left:597px;top:652px;width:1px;height:18px;background:#b5bcc4;border-right:1px solid #fff"></div>
<svg style="position:absolute;left:604px;top:654px" width="15" height="13" viewBox="0 0 15 13">
 <rect x="0.5" y="0.5" width="13" height="11" fill="#fff" stroke="#666"/>
 <path d="M0.5 3.5h13M0.5 6.5h13M0.5 9.5h13M4.5 0.5v11M8.5 0.5v11" stroke="#777"/>
</svg>
<div style="left:621px;top:652px;width:18px;height:18px;background:linear-gradient(#fde49a,#fbd16a);border:1px solid #dea55a;border-radius:2px"></div>
<div style="left:625px;top:655px;width:10px;height:11px;border:1px solid #555;background:#fff"></div>
<div style="left:627px;top:657px;width:6px;height:7px;border:1px solid #888"></div>
<svg style="position:absolute;left:642px;top:654px" width="14" height="13" viewBox="0 0 14 13">
 <rect x="0.5" y="0.5" width="13" height="11" fill="#fff" stroke="#666"/>
 <rect x="1" y="1" width="5" height="6" fill="#666"/><path d="M6.5 0.5v11M0.5 7.5h6" stroke="#333"/>
</svg>
<div class="t" style="left:667px;top:654px;font-size:11px;color:#333">100%</div>
<div style="left:704px;top:653px;width:15px;height:15px;border-radius:50%;border:1px solid #8a929c;background:radial-gradient(circle at 50% 30%,#fff,#d8dce2)"></div>
<div style="left:708px;top:660px;width:7px;height:2px;background:#333"></div>
<div style="left:719px;top:660px;width:101px;height:1px;background:#8d949c;border-bottom:1px solid #fff"></div>
<div style="left:769px;top:656px;width:1px;height:8px;background:#8d949c"></div>
<svg style="position:absolute;left:765px;top:654px" width="10" height="13" viewBox="0 0 10 13"><path d="M0.5 0.5h8v8l-4 4-4-4z" fill="#f4f6f8" stroke="#6f7780"/></svg>
<div style="left:820px;top:653px;width:15px;height:15px;border-radius:50%;border:1px solid #8a929c;background:radial-gradient(circle at 50% 30%,#fff,#d8dce2)"></div>
<div style="left:824px;top:660px;width:7px;height:2px;background:#333"></div>
<div style="left:826.5px;top:657px;width:2px;height:8px;background:#333"></div>
<svg style="position:absolute;left:843px;top:660px" width="10" height="10" viewBox="0 0 10 10"><g fill="#a0a7b0"><rect x="7" y="1" width="2" height="2"/><rect x="4" y="4" width="2" height="2"/><rect x="7" y="4" width="2" height="2"/><rect x="1" y="7" width="2" height="2"/><rect x="4" y="7" width="2" height="2"/><rect x="7" y="7" width="2" height="2"/></g></svg>
<!-- red annotation -->
<div style="left:145px;top:278px;width:53px;height:42px;border:5px solid #ff0000;border-radius:11px;background:#fff;box-shadow:2px 3px 4px rgba(0,0,0,0.35), inset 2px 3px 4px rgba(0,0,0,0.3)"></div>
<svg style="position:absolute;left:160px;top:288px" width="20" height="20" viewBox="160 288 20 20"><path d="M169.3 293.2h2.6v11.8h-2.6v-8.3l-2.6 1.4v-2.4z" fill="#f00"/></svg>

</body></html>
